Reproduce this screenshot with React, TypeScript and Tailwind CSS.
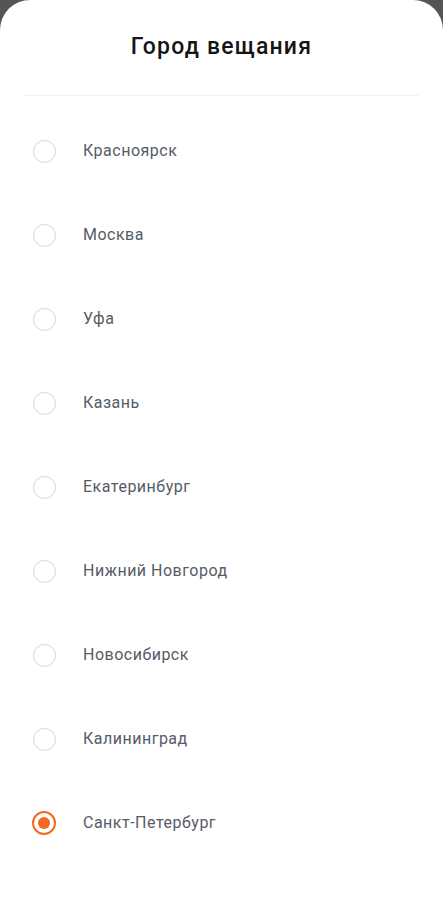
import React, { useState } from "react";

const cities = [
  "Красноярск",
  "Москва",
  "Уфа",
  "Казань",
  "Екатеринбург",
  "Нижний Новгород",
  "Новосибирск",
  "Калининград",
  "Санкт-Петербург",
];

const Radio = ({ checked }: { checked: boolean }) =>
  checked ? (
    <div className="w-6 h-6 rounded-full border-[2.5px] border-[#f26a21] flex items-center justify-center">
      <div className="w-3 h-3 rounded-full bg-[#f26a21]" />
    </div>
  ) : (
    <div className="w-[23px] h-[23px] rounded-full border-[1.5px] border-[#d3d6e6]" />
  );

export default function App() {
  const [selected, setSelected] = useState("Санкт-Петербург");

  return (
    <div className="w-[443px] h-[900px] bg-[#555555] font-['Roboto',sans-serif]">
      <div className="h-full bg-white rounded-t-[30px]">
        <div className="h-[95px] flex items-center justify-center">
          <h1 className="text-[23px] font-medium text-[#151515] tracking-[1.2px]">
            Город вещания
          </h1>
        </div>
        <div className="mx-6 h-px bg-[#f1f1f4]" />
        <ul className="pt-[13px]">
          {cities.map((city) => (
            <li
              key={city}
              onClick={() => setSelected(city)}
              className="h-[84px] flex items-center pl-[32px] cursor-pointer"
            >
              <div className="w-6 flex justify-center">
                <Radio checked={selected === city} />
              </div>
              <span className="ml-[27px] text-[16px] tracking-[0.5px] text-[#565b66]">
                {city}
              </span>
            </li>
          ))}
        </ul>
      </div>
    </div>
  );
}
